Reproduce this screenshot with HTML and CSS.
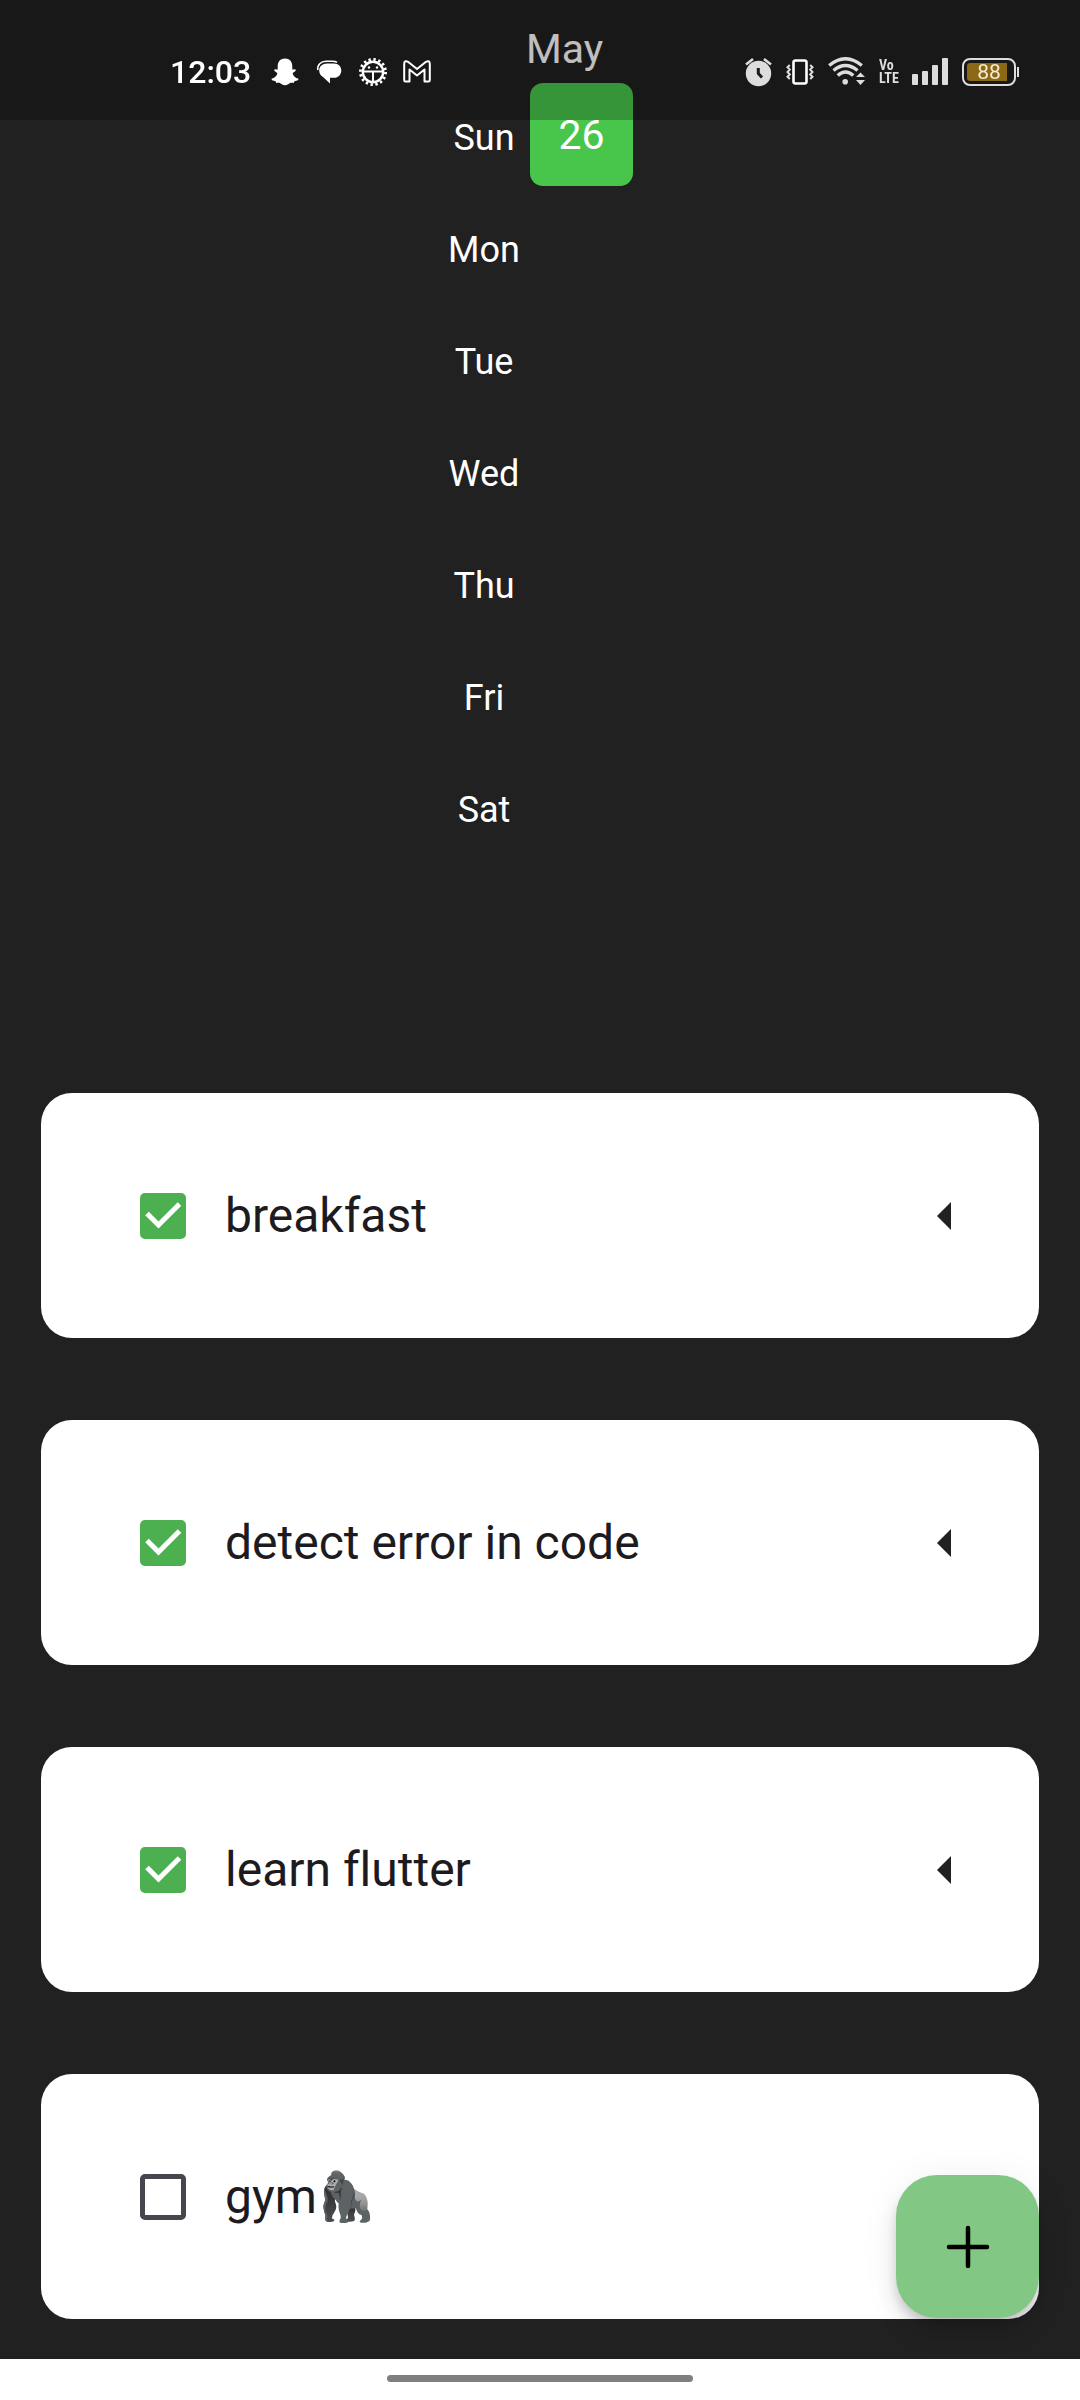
FILE: index.html
```html
<!DOCTYPE html>
<html lang="en">
<head>
<meta charset="utf-8">
<meta name="viewport" content="width=device-width, initial-scale=1">
<title>Habits</title>
<link rel="stylesheet" href="styles.css">
</head>
<body>
<header class="status">
  <div class="status-group">
    <time class="clock">12:03</time>
    <svg class="note" viewBox="0 0 28 30" aria-hidden="true"><path fill="#fff" d="M14 1.500C18.500 1.500 21.300 4.600 21.300 9V12.600C22.500 12.100 24.600 11.800 24.800 13C25 14.300 22.200 15 21.600 16.200C22.400 19 24.200 21 27.500 21.800C27.700 23.400 25.600 23.800 23.500 24.300L22.600 26C19.800 25.200 18.600 26 17.200 27.200C15.200 28.500 12.800 28.500 10.800 27.200C9.400 26 8.200 25.200 5.400 26L4.500 24.300C2.400 23.800 .3 23.400 .5 21.800C3.800 21 5.600 19 6.400 16.200C5.800 15 3 14.300 3.200 13C3.400 11.800 5.500 12.100 6.700 12.600V9C6.700 4.600 9.500 1.500 14 1.500Z"/></svg>
    <svg class="note" viewBox="0 0 28 30" aria-hidden="true"><path fill="#fff" d="M12 6.500H19C23.500 6.500 26.300 9.500 26.300 13.500C26.300 17.500 23.500 20.800 19 20.800H15V26.500L8 20C5.500 18.500 4.200 16.500 4.200 13.500C4.200 9.500 7.500 6.500 12 6.500Z"/><path fill="none" stroke="#fff" stroke-width="1.600" d="M2.800 13C2 8 6 4.200 11 4.200H17C19.500 4.200 21 4.600 22 5.400"/></svg>
    <svg class="note" viewBox="0 0 28 30" aria-hidden="true"><circle cx="14" cy="15" r="12.600" fill="none" stroke="#fff" stroke-width="2.800" stroke-dasharray="2.400 2.548"/><circle cx="14" cy="15" r="10.200" fill="none" stroke="#fff" stroke-width="2.400"/><path stroke="#fff" stroke-width="2" d="M5 14.500H23M14 15V25"/><circle cx="10" cy="10.500" r="1.200" fill="#fff"/><circle cx="18" cy="10.500" r="1.200" fill="#fff"/></svg>
    <svg class="note" viewBox="0 0 28 30" aria-hidden="true"><path fill="none" stroke="#fff" stroke-width="2" stroke-linejoin="round" d="M2.500 24.500Q1.200 24.500 1.200 23V7Q1.200 3 5 4.800L14 12L23 4.800Q26.800 3 26.800 7V23Q26.800 24.500 25.500 24.500H21.500V12.500L14 18.500L6.500 12.500V24.500Z"/></svg>
  </div>
  <div class="status-group status-right">
    <svg width="27" height="30" viewBox="0 0 27 30" aria-hidden="true"><circle cx="13.500" cy="16.500" r="12.700" fill="#ddd"/><path stroke="#ddd" stroke-width="2.600" d="M1 7.500L8 2M26 7.500L19 2"/><path fill="none" stroke="#1a1a1a" stroke-width="3" d="M13.300 11V16.500L17 20.500"/></svg>
    <svg width="28" height="30" viewBox="0 0 28 30" fill="none" aria-hidden="true"><rect x="7.500" y="3.500" width="13" height="23" rx="2" stroke="#fff" stroke-width="2.600"/><path stroke="#ddd" stroke-width="2" d="M3.800 8L1.500 10.300L3.800 12.600L1.500 15L3.800 17.400L1.500 19.700L3.800 22M24.200 8L26.500 10.300L24.200 12.600L26.500 15L24.200 17.400L26.500 19.700L24.200 22"/></svg>
    <svg width="37" height="30" viewBox="0 0 37 30" fill="none" aria-hidden="true"><path stroke="#ddd" stroke-width="3.400" d="M1.200 8.500Q17.500-5 33.800 8.500M5.500 13.500Q17.500 3.500 29.500 13.500M9.700 18.500Q17.500 11.500 25.300 18.500"/><circle cx="17.200" cy="24.800" r="2.800" fill="#ddd"/><path fill="#ddd" d="M28 20L32.500 15.500L37 20ZM28 23L32.500 28L37 23Z"/></svg>
    <span class="volte"><span>Vo</span><span>LTE</span></span>
    <svg width="36" height="30" viewBox="0 0 36 30" fill="#ddd" aria-hidden="true"><rect x="0" y="17" width="6" height="11" rx="1"/><rect x="10" y="14" width="6" height="14" rx="1"/><rect x="20" y="8" width="6" height="20" rx="1"/><rect x="30" y="1" width="6" height="27" rx="1"/></svg>
    <span class="battery"><span class="battery-case"><span class="battery-level">88</span></span><span class="battery-tip"></span></span>
  </div>
</header>

<main class="app">
  <section class="calendar" aria-label="Calendar">
    <h1 class="month">May</h1>
    <span class="day">Sun</span><button class="date" type="button">26</button>
    <span class="day">Mon</span>
    <span class="day">Tue</span>
    <span class="day">Wed</span>
    <span class="day">Thu</span>
    <span class="day">Fri</span>
    <span class="day">Sat</span>
  </section>
  <ul class="habits">
    <li class="habit"><label class="habit-label"><input class="check" type="checkbox" checked>breakfast</label><button class="open" type="button" aria-label="Open breakfast"><svg width="14" height="28" viewBox="0 0 14 28"><path fill="#212121" d="M0 14L14 0V28Z"/></svg></button></li>
    <li class="habit"><label class="habit-label"><input class="check" type="checkbox" checked>detect error in code</label><button class="open" type="button" aria-label="Open detect error in code"><svg width="14" height="28" viewBox="0 0 14 28"><path fill="#212121" d="M0 14L14 0V28Z"/></svg></button></li>
    <li class="habit"><label class="habit-label"><input class="check" type="checkbox" checked>learn flutter</label><button class="open" type="button" aria-label="Open learn flutter"><svg width="14" height="28" viewBox="0 0 14 28"><path fill="#212121" d="M0 14L14 0V28Z"/></svg></button></li>
    <li class="habit"><label class="habit-label"><input class="check" type="checkbox">gym🦍</label></li>
  </ul>
</main>
<button class="fab" type="button" aria-label="Add habit"><svg width="44" height="44" viewBox="0 0 44 44"><path stroke="#000" stroke-width="4.500" stroke-linecap="round" d="M22 3V41M3 22H41"/></svg></button>
<footer class="nav"><div class="handle"></div></footer>
</body>
</html>
```
FILE: styles.css
```css
* { box-sizing: border-box; }
body {
  margin: 0;
  min-height: 100vh;
  display: flex;
  flex-direction: column;
  background: #212121;
  color: #fff;
  font-family: Roboto, "Noto Sans", "Noto Color Emoji", sans-serif;
  font-variant-ligatures: none;
}
button { border: 0; padding: 0; font: inherit; color: inherit; background: none; display: grid; place-items: center; }
svg { display: block; flex: none; }

.status {
  position: fixed;
  inset: 0 0 auto;
  z-index: 2;
  height: 120px;
  padding: 24px 61px 0 170px;
  display: flex;
  align-items: center;
  justify-content: space-between;
  background: rgba(0, 0, 0, .25);
}
.status-group { display: flex; align-items: center; gap: 16px; }
.status-right { gap: 14px; color: #ddd; }
.clock { min-width: 85px; font-size: 32px; font-weight: 500; line-height: 32px; }
.note { width: 28px; height: 30px; }
.volte {
  width: 19px;
  display: flex;
  flex-direction: column;
  font: bold 14px/13px "Roboto Condensed", "Liberation Sans Narrow", Roboto, sans-serif;
}
.battery { display: flex; align-items: center; gap: 1px; }
.battery-case { width: 54px; height: 28px; padding: 3px; border: 2px solid #ddd; border-radius: 8px; }
.battery-level {
  display: block;
  width: 40px;
  height: 18px;
  padding-left: 4px;
  border-radius: 3px 0 0 3px;
  background: #8b6914;
  color: #f6ecd4;
  font-size: 21px;
  line-height: 18px;
  text-align: center;
}
.battery-tip { width: 2px; height: 10px; background: #ddd; }

.app { flex: 1; background: #212121; }
.calendar {
  display: grid;
  grid-template-columns: 88px 116px;
  grid-template-rows: 80px;
  grid-auto-rows: 112px;
  justify-content: center;
  padding-bottom: 229px;
}
.month { grid-column: 2; margin: 0; padding-top: 18px; font-size: 41px; font-weight: 400; line-height: 62px; }
.day { grid-column: 1; padding: 4px 0 0 4px; font-size: 36px; line-height: 108px; text-align: center; }
.date {
  grid-column: 2;
  width: 103px;
  height: 103px;
  margin: 3px 4px;
  border-radius: 13px;
  background: #48c64c;
  font-size: 41px;
}

.habits { list-style: none; margin: 0; padding: 0 41px 40px; display: grid; gap: 82px; }
.habit {
  height: 245px;
  padding: 0 88px 0 99px;
  display: flex;
  align-items: center;
  justify-content: space-between;
  border-radius: 31px;
  background: #fff;
}
.habit-label { display: flex; align-items: center; color: #1d1b20; font-size: 48px; line-height: 60px; }
.check {
  appearance: none;
  width: 46px;
  height: 46px;
  margin: 0 39px 0 0;
  border: 5px solid #49454f;
  border-radius: 5px;
}
.check:checked {
  border: 0;
  background: #4caf50 url("data:image/svg+xml,%3Csvg xmlns='http://www.w3.org/2000/svg' viewBox='0 0 46 46'%3E%3Cpath d='M7 20.500L18.500 32L39.500 11' fill='none' stroke='%23fff' stroke-width='5'/%3E%3C/svg%3E");
}

.fab {
  position: fixed;
  right: 41px;
  bottom: 82px;
  width: 143px;
  height: 143px;
  border-radius: 41px;
  background: #82c884;
  box-shadow: 0 8px 13px -3px rgba(0, 0, 0, .2), 0 15px 26px rgba(0, 0, 0, .1), 0 3px 40px rgba(0, 0, 0, .06);
}

.nav { height: 41px; padding-top: 16px; background: #fff; }
.handle { width: 306px; height: 7px; margin: 0 auto; border-radius: 4px; background: #7f7f7f; }
```
